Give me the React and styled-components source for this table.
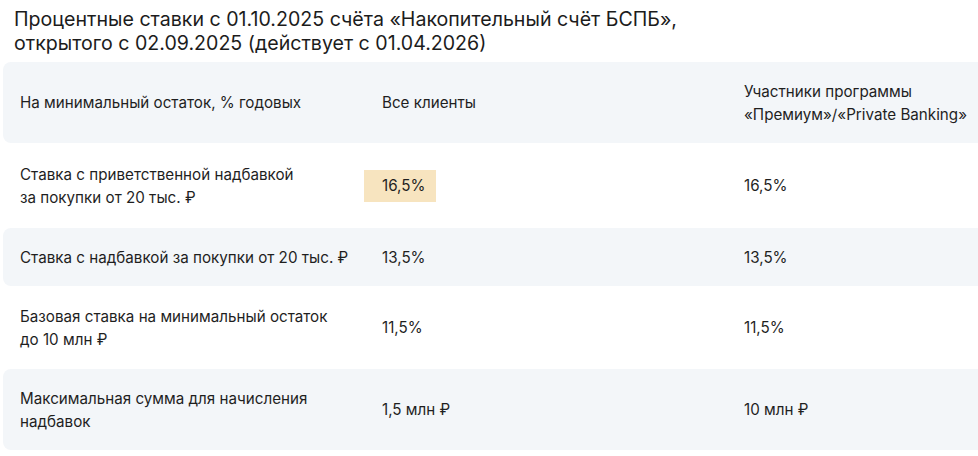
import React from 'react';
import styled, { createGlobalStyle, css } from 'styled-components';

const GlobalStyle = createGlobalStyle`
  html, body {
    margin: 0;
    padding: 0;
    background: #fff;
    overflow: hidden;
  }
  body {
    font-family: Inter, "Noto Sans", sans-serif;
    color: #1f1f1f;
  }
`;

const Page = styled.div`
  width: 978px;
  height: 456px;
  overflow: hidden;
  padding-top: 7px;
  box-sizing: border-box;
`;

const Title = styled.h2`
  margin: 0 0 7px 14px;
  font-size: 19.6px;
  line-height: 24px;
  font-weight: 400;
  color: #1c1c1c;
`;

const Table = styled.div`
  margin-left: 3px;
  width: 1000px;
`;

const Row = styled.div`
  display: grid;
  grid-template-columns: 362px 362px 1fr;
  align-items: center;
  padding: 0 0 0 17px;
  min-height: ${props => props.height}px;
  border-radius: 8px;
  font-size: 15.2px;
  line-height: 23px;
  ${props => props.shaded && css`
    background: #f3f6f9;
  `};
`;

const Cell = styled.div`
  padding-right: 12px;
  white-space: nowrap;
`;

const Highlight = styled.span`
  display: inline-block;
  margin-left: -18px;
  width: 72px;
  box-sizing: border-box;
  padding: 4px 0 5px 18px;
  background: #f7e4bf;
`;

const rows = [
  { label: ['Ставка с приветственной надбавкой', 'за покупки от 20 тыс. ₽'], all: '16,5%', prem: '16,5%', hl: true, height: 85 },
  { label: ['Ставка с надбавкой за покупки от 20 тыс. ₽'], all: '13,5%', prem: '13,5%', shaded: true, height: 58 },
  { label: ['Базовая ставка на минимальный остаток', 'до 10 млн ₽'], all: '11,5%', prem: '11,5%', height: 83 },
  { label: ['Максимальная сумма для начисления', 'надбавок'], all: '1,5 млн ₽', prem: '10 млн ₽', shaded: true, height: 81 },
];

const Lines = ({ items }) => items.map((l, i) => (
  <React.Fragment key={i}>
    {i > 0 && <br />}
    {l}
  </React.Fragment>
));

export default function App() {
  return (
    <Page>
      <GlobalStyle />
      <Title>
        Процентные ставки с 01.10.2025 счёта «Накопительный счёт БСПБ»,
        <br />
        открытого с 02.09.2025 (действует с 01.04.2026)
      </Title>
      <Table>
        <Row shaded height={81}>
          <Cell>На минимальный остаток, % годовых</Cell>
          <Cell>Все клиенты</Cell>
          <Cell>
            Участники программы
            <br />
            «Премиум»/«Private Banking»
          </Cell>
        </Row>
        {rows.map((r, i) => (
          <Row key={i} shaded={r.shaded} height={r.height}>
            <Cell><Lines items={r.label} /></Cell>
            <Cell>{r.hl ? <Highlight>{r.all}</Highlight> : r.all}</Cell>
            <Cell>{r.prem}</Cell>
          </Row>
        ))}
      </Table>
    </Page>
  );
}
